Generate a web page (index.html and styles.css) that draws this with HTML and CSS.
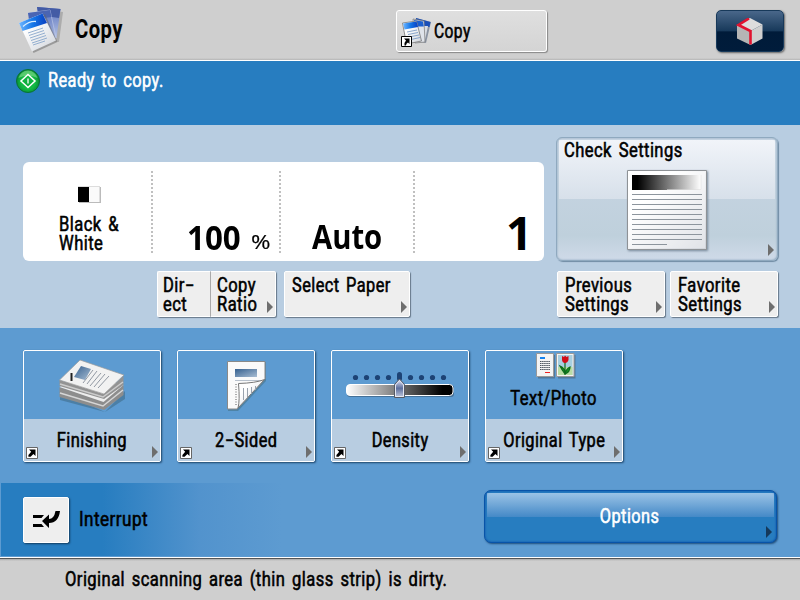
FILE: index.html
```html
<!DOCTYPE html>
<html lang="en">
<head>
<meta charset="utf-8">
<title>Copy</title>
<link rel="stylesheet" href="styles.css">
</head>
<body>
<svg width="0" height="0" class="defs">
  <defs>
    <linearGradient id="page" x1="0" y1="0" x2="1" y2="1"><stop offset=".3" stop-color="#fff"/><stop offset="1" stop-color="#cfd3da"/></linearGradient>
    <linearGradient id="ink" x1="0" y1="0" x2="1" y2="0"><stop stop-color="#6eb6ff"/><stop offset=".5" stop-color="#1476e8"/><stop offset="1" stop-color="#0a3fc0"/></linearGradient>
    <linearGradient id="back" x1="0" y1="0" x2="0" y2="1"><stop stop-color="#5a72bc"/><stop offset="1" stop-color="#b5c3e6"/></linearGradient>
    <linearGradient id="pic" x1="0" y1="0" x2="1" y2="1"><stop stop-color="#35608f"/><stop offset="1" stop-color="#a8bdd3"/></linearGradient>
    <linearGradient id="bw" x1="0" y1="0" x2="1" y2="0"><stop stop-color="#fff"/><stop offset=".9" stop-color="#000"/></linearGradient>
    <linearGradient id="wb" x1="0" y1="0" x2="1" y2="0"><stop offset=".08" stop-color="#000"/><stop offset="1" stop-color="#fff"/></linearGradient>
    <radialGradient id="green" cx=".5" cy=".55" r=".5"><stop stop-color="#0caa3c"/><stop offset=".6" stop-color="#12bb44"/><stop offset="1" stop-color="#0a8f35"/></radialGradient>
    <linearGradient id="knob" x1="0" y1="0" x2="0" y2="1"><stop stop-color="#eef"/><stop offset=".5" stop-color="#5c6e9c"/><stop offset="1" stop-color="#c3cbe0"/></linearGradient>
    <symbol id="shortcut" viewBox="0 0 12 12"><path d="M.5 .5h11v11H.5z" fill="#fff" stroke="#666"/><path d="M3 2.500h6.500V9L7.400 6.900 4.600 9.700 2.400 9.700V8L5.200 4.700z" fill="#000"/></symbol>
  </defs>
</svg>

<header class="header">
  <svg class="title-icon" width="48" height="48" viewBox="0 0 48 48">
    <path d="M22 2l23 3-4 30-18-2z" fill="#777" opacity=".4" transform="translate(1 1)"/>
    <path d="M20 1l23.500 2-4 29-17-2z" fill="url(#back)"/><path d="M20 1l23.500 2-1.500 9L22 9z" fill="#435ba5"/>
    <path d="M11 7l22-3 6 28-19 4z" fill="url(#back)" stroke="#c3ccea" stroke-width=".6"/><path d="M11 7l22-3 1.500 7L12 14z" fill="#4a65b3"/>
    <path d="M4 18l24-10 12.500 28-24 11z" fill="#666" opacity=".5"/>
    <path d="M2 17L25.500 7.500l13.500 27L15 45.500z" fill="url(#page)"/>
    <path d="M2 17L25.500 7.500l4.500 9.500L5.500 25z" fill="url(#ink)"/>
    <path d="M6 20.500q6-5.500 13-5" fill="none" stroke="#d7edff" stroke-width="1.300"/>
    <path d="M11 27l15-5M12 29.500l15-5M13 32l15-5M14 34.500l15-5M15 37l15-5M16 39l12-4" stroke="#94afd0" stroke-width="1"/>
  </svg>
  <h1 class="title"><span class="t">Copy</span></h1>
  <div class="tab">
    <svg class="tab-icon" width="31" height="32" viewBox="0 0 31 32">
      <path d="M15 1l15 4-5 21-12-2z" fill="#8a93a2"/><path d="M15 1l14.500 4-1 5-14-2z" fill="#1a4fb8"/><path d="M23 9h4l-3 14-3-1z" fill="#d9dde4"/>
      <path d="M12 2l11 2 1 21-10 1z" fill="#dfe3ea" stroke="#777" stroke-width=".7"/><path d="M13 3l9 1.500 .8 5-9 0z" fill="#1a5fd0"/>
      <path d="M1.500 6l14-2 5 20-15 3z" fill="url(#page)" stroke="#777" stroke-width=".8"/><path d="M2 6.500l13.500-2 1.500 5.500-13.500 2.500z" fill="url(#ink)"/>
      <path d="M6 15l10-2M7 17.500l10-2M8 20l10-2M10 22.500l9-2" stroke="#7e9cc4" stroke-width=".9"/>
      <path d="M.5 19.500h10v10H.5z" fill="#fff" stroke="#000"/><path d="M3 21.500h5.500v5.500L7 25.500Q5 26.500 5 28.500H3.500q-.5-3 1.500-5z" fill="#000"/>
    </svg>
    <span class="t">Copy</span>
  </div>
  <div class="cube">
    <svg width="28" height="28" viewBox="0 0 28 28">
      <path d="M14 0l12.500 6.500L14.500 13 1 7z" fill="#ddd"/><path d="M1 7L14.500 13v14L1 20.500z" fill="#b5b5b5"/><path d="M26.500 6.500L14.500 13v14l12-6.500z" fill="#cfcfcf"/>
      <path d="M13 .5L2.500 7 14.500 13v13.500" fill="none" stroke="#e1122f" stroke-width="2.600"/>
    </svg>
  </div>
</header>

<section class="status">
  <svg width="24" height="24" viewBox="0 0 24 24"><circle cx="12" cy="12" r="11.500" fill="url(#green)" stroke="#087237"/><path d="M2.500 9a9.800 9.800 0 0 1 19 0Q12 4 2.500 9z" fill="#7fe08b" opacity=".65"/><path d="M12 5.500l7 6.500-7 6.500L5 12z" fill="none" stroke="#fff" stroke-width="1.500"/><path d="M12 9.500v5" stroke="#fff" stroke-width="1.300"/></svg>
  <span class="t">Ready to copy.</span>
</section>

<main class="settings">
  <div class="left">
    <div class="display">
      <div class="cell color"><i class="bw"></i><span class="t two">Black &amp;<br>White</span></div>
      <div class="cell ratio"><span class="big n100">100</span><span class="pct">%</span></div>
      <div class="cell paper"><span class="big auto">Auto</span></div>
      <div class="cell count"><span class="big one">1</span></div>
    </div>
    <div class="row">
      <div class="btn direct"><span class="t">Dir−<br>ect</span></div>
      <div class="btn copyratio"><span class="t">Copy<br>Ratio</span><i class="arr"></i></div>
      <div class="btn select"><span class="t">Select Paper</span><i class="arr"></i></div>
    </div>
  </div>
  <div class="right">
    <div class="check">
      <span class="t">Check Settings</span>
      <svg width="80" height="80" viewBox="0 0 80 80">
        <path d="M.5 .5h79v79H.5z" fill="url(#page)" stroke="#8e9296"/><path d="M2 2h76v76H2z" fill="#fff" opacity=".35"/>
        <path d="M5 5h69v15H5z" fill="url(#wb)"/><path d="M40 19.500h34V5" fill="none" stroke="#ddd" stroke-opacity=".6"/>
        <path d="M5 24.500h70M5 29.500h70M5 34.500h70M5 39.500h70M5 44.500h70M5 49.500h70M5 54.500h70M5 59.500h70M5 64.500h70M5 69.500h70M5 74.500h35" stroke="#8d959d"/>
      </svg>
      <i class="arr"></i>
    </div>
    <div class="row">
      <div class="btn side"><span class="t">Previous<br>Settings</span><i class="arr"></i></div>
      <div class="btn side"><span class="t">Favorite<br>Settings</span><i class="arr"></i></div>
    </div>
  </div>
</main>

<section class="functions">
  <div class="cards">
    <div class="card">
      <div class="art"><svg width="136" height="68" viewBox="0 0 136 68">
        <path d="M36 41l45 20 20-21v8L81 61 36 49z" fill="#356" opacity=".4"/>
        <path d="M35.500 36l44 13 20-15v10L80 59 35.500 46z" fill="#8d8d8d"/><path d="M35.500 36l22-13 42 11-20 17z" fill="#ededed"/><path d="M36 42l43 13 20-16" fill="none" stroke="#d6d6d6" stroke-width="1.500"/>
        <path d="M35.500 29l44 14 20-18v9L80 48 35.500 35z" fill="#939393"/><path d="M36 33l43 13 20-15" fill="none" stroke="#ccc" stroke-width="1.500"/>
        <path d="M35.500 29L56 9l44 15-20 19z" fill="#f2f2f2" stroke="#999" stroke-width=".7"/>
        <path d="M57 15l10 3-6 11-11-3z" fill="url(#pic)"/><path d="M47.500 22v8" stroke="#222" stroke-width="2"/>
        <path d="M69 19l-10 13M73 20L63 33M77 22L66 35M81 23L70 36M85 25L74 37" stroke="#9299a3" stroke-width="1"/>
      </svg></div>
      <div class="label"><span class="t wide">Finishing</span><svg class="short" width="12" height="12"><use href="#shortcut"/></svg><i class="arr"></i></div>
    </div>
    <div class="card">
      <div class="art"><svg width="136" height="68" viewBox="0 0 136 68">
        <path d="M50 11h38v19L60 60H50z" fill="#355" opacity=".35"/>
        <path d="M49.500 10.500H87V28L59 58h-9.500z" fill="#fafafa" stroke="#898989"/>
        <path d="M57 18h22v8H57z" fill="url(#pic)"/><path d="M57 29.500h28" stroke="#b8c1cc"/><path d="M58 33v22" stroke="#aaa" stroke-width="2" stroke-dasharray="1 1.500"/>
        <path d="M60.500 32.500Q78 32 86.500 28.500L60 57Q62 50 60.500 32.500z" fill="url(#page)" stroke="#777"/>
        <path d="M65.500 37v12M69.500 37v9M73.500 36v7M77.500 35v4" stroke="#99a2ad"/>
      </svg></div>
      <div class="label"><span class="t">2−Sided</span><svg class="short" width="12" height="12"><use href="#shortcut"/></svg><i class="arr"></i></div>
    </div>
    <div class="card">
      <div class="art"><svg width="136" height="68" viewBox="0 0 136 68">
        <rect x="15" y="34" width="107" height="12" rx="3" fill="#234" opacity=".4"/>
        <rect x="14.500" y="33.500" width="106.500" height="11" rx="3.500" fill="url(#bw)" stroke="#fff"/>
        <g fill="#1d4375"><circle cx="23.500" cy="26.500" r="2.600"/><circle cx="34.500" cy="26.500" r="2.600"/><circle cx="45.500" cy="26.500" r="2.600"/><circle cx="56.500" cy="26.500" r="2.600"/><rect x="65" y="21" width="5" height="9" rx="2.500"/><circle cx="78.500" cy="26.500" r="2.600"/><circle cx="89.500" cy="26.500" r="2.600"/><circle cx="100.500" cy="26.500" r="2.600"/><circle cx="111.500" cy="26.500" r="2.600"/></g>
        <path d="M62.500 46.500v-13l5-5.500 5 5.500v13z" fill="url(#knob)" stroke="#555a65"/><path d="M63.500 45.500V34l4-4.500 4 4.500v11.500z" fill="none" stroke="#e5e8f0"/>
      </svg></div>
      <div class="label"><span class="t">Density</span><svg class="short" width="12" height="12"><use href="#shortcut"/></svg><i class="arr"></i></div>
    </div>
    <div class="card">
      <div class="art photo"><svg width="40" height="26" viewBox="0 0 40 26">
        <path d="M2 2h17v23.500H2zM22 2h17.500v23.500H22z" fill="#456" opacity=".5"/>
        <path d="M.5 .5h17v23H.5zM20.500 .5h17.500v23H20.500z" fill="#f4f4f4" stroke="#999"/>
        <path d="M4 4h5v2H4z" fill="#1583ef"/><path d="M4 8.500h10M4 10.500h10M4 12.500h10M4 14.500h10M4 16.500h10" stroke="#4b535c" stroke-dasharray="1.500 .6"/><path d="M9 19.500h5" stroke="#e22"/>
        <path d="M22 2h14.500v20H22z" fill="#a8cfe0"/><path d="M22 14h14.500v8H22z" fill="#b9dca4"/>
        <path d="M29 9v13M29 21q-3-4-5-8 5 2 5 8 1-5 5-7 0 5-5 7" fill="#159323" stroke="#0d6b1a" stroke-width="1.200"/><path d="M26 3l2 1 1-1.500L30.500 4l2-1v4q-1 3-3.500 3T26 7z" fill="#d20d18"/>
      </svg><span class="t">Text/Photo</span></div>
      <div class="label"><span class="t">Original Type</span><svg class="short" width="12" height="12"><use href="#shortcut"/></svg><i class="arr"></i></div>
    </div>
  </div>
  <div class="bottom">
    <div class="interrupt">
      <div class="ibtn"><svg width="28" height="18" viewBox="0 0 28 18"><path d="M0 4h11L8.500 7H0zM0 13h8.500l2.500 3H0z" fill="#000"/><path d="M9 10l7-6.500v4.500q5 0 6.500-8H27q-1.500 12-11 12v5z" fill="#000"/></svg></div>
      <span class="t">Interrupt</span>
    </div>
    <div class="options"><span class="t">Options</span><i class="arr"></i></div>
  </div>
</section>

<footer class="footer"><span class="t">Original scanning area (thin glass strip) is dirty.</span></footer>
</body>
</html>
```

FILE: styles.css
```css
* { box-sizing: border-box; }
body {
  margin: 0;
  width: 800px;
  height: 600px;
  overflow: hidden;
  background: #cfcfcf;
  color: #000;
  font: 19px/19px Roboto, "Liberation Sans", sans-serif;
}
.defs { position: absolute; }
.t {
  display: inline-block;
  white-space: nowrap;
  letter-spacing: .5px;
  word-spacing: 2.5px;
  -webkit-text-stroke: .55px currentColor;
  transform: translateY(.6px) scale(.872, 1.03);
  transform-origin: left center;
}

.header {
  height: 61px;
  display: flex;
  align-items: flex-start;
  background: linear-gradient(#cfcfcf 58px, #b5b5b5 60px, #fff 60px);
}
.title-icon { margin: 6px 0 0 17px; flex: none; }
.title { margin: 16px 0 0 10px; width: 320px; font-size: 25px; line-height: 25px; font-weight: bold; }
.title .t { transform: translateY(.5px) scaleX(.81); -webkit-text-stroke-width: 0; }
.tab {
  width: 151px; height: 42px; margin: 10px 0 0 1px;
  display: flex;
  border: 1px solid #fff; border-radius: 3px;
  background: linear-gradient(#dfdfdf, #d4d4d4);
  box-shadow: 1px 1px 1px #888;
}
.tab-icon { margin: 6px 2px 0 4px; }
.tab .t { margin-top: 10px; transform: translateY(.6px) scale(.82, 1.03); }
.cube {
  margin: 10px 0 0 169px; width: 68px; height: 42px;
  padding: 7px 0 0 19px;
  border-radius: 5px; border: 1px solid #17395a;
  background: linear-gradient(#49678a, #17395a 50%, #001b39 52%, #001c3b);
  box-shadow: 1px 1px 2px #666;
}

.status { height: 64px; display: flex; padding: 8px 0 0 16px; gap: 8px; color: #fff; background: #277dc0; }
.status .t { margin-top: 2px; transform: translateY(.6px) scale(.86, 1.03); }

.settings { height: 203px; display: flex; gap: 12px; padding: 13px 0 0 23px; background: #b8cde1; }
.left { width: 521px; padding-top: 24px; }
.display { height: 99px; display: flex; background: #fff; border-radius: 6px; padding: 9px 0 8px; }
.cell { display: flex; }
.cell + .cell { background: repeating-linear-gradient(#c0c0c0 0 2px, #fff 2px 4px) left / 2px 100% no-repeat; }
.color { width: 128px; flex-direction: column; padding: 15px 0 0 36px; }
.bw { width: 22px; height: 16px; margin: 0 0 12px 19px; background: linear-gradient(90deg, #000 50%, #fafafa 50%); box-shadow: 1px 1px 0 #bbb, inset -1px 1px 0 #ddd; }
.ratio { width: 128px; }
.paper { width: 134px; }
.count { flex: 1; }
.big { font-family: "Open Sans", sans-serif; font-weight: 700; font-size: 34px; line-height: 40px; transform-origin: left; }
.n100 { margin: 46px 0 0 36px; width: 64px; transform: scaleX(.92); }
.pct { font: 500 20px/24px "Open Sans", sans-serif; margin-top: 59px; -webkit-text-stroke: .2px #000; transform: scaleX(1.18); transform-origin: left; }
.auto { margin: 45px 0 0 33px; transform: scaleX(.86); }
.one { margin: 36px 0 0 93px; font-size: 46px; line-height: 50px; }

.row { display: flex; margin-top: 10px; }
.btn {
  position: relative; height: 46px; padding: 3px 0 0 7px;
  background: #eee; border: 1px solid #fff; border-radius: 2px;
  box-shadow: 1px 1px 1px #66788a;
}
.direct { width: 53px; margin-left: 134px; padding-left: 5px; border-right: 0; border-radius: 2px 0 0 2px; }
.copyratio { width: 66px; padding-left: 6px; border-left: 1px solid #aaa; border-radius: 0 2px 2px 0; }
.select { width: 126px; margin-left: 8px; }
.select .t { transform: translateY(.6px) scale(.86, 1.03); }
.side { width: 108px; margin-right: 5px; }
.arr { position: absolute; right: 2px; bottom: 3px; width: 6px; height: 12px; background: #6e6e6e; clip-path: polygon(0 0, 100% 50%, 0 100%); }

.check {
  position: relative; width: 222px; height: 124px; padding: 2px 0 0 7px;
  border: 1px solid #8fa9bf; border-radius: 6px;
  background:
    linear-gradient(#f1f4f9, #d7e0ea) 2px 2px / 216px 59px no-repeat,
    linear-gradient(#c9d6e4, #bfd0dc 80%, #cfdae8);
  box-shadow: 1px 1px 1px #6f8ba3, inset 0 0 2px #7f9db5;
  margin-top: -1px;
}
.check .t { transform: translateY(1px) scale(.872, 1.03); }
.check svg { display: block; margin: 11px 0 0 63px; filter: drop-shadow(1px 1px 1px #789); }
.check .arr { right: 3px; bottom: 4px; }
.right .row { margin: 10px 0 0 1px; }

.functions { height: 229px; padding-top: 22px; background: #5d9bd1; }
.cards { display: flex; gap: 16px; padding-left: 23px; }
.card {
  width: 138px; height: 112px;
  border: 1px solid #fff; border-radius: 2px;
  box-shadow: 1px 1px 2px #1d4468;
}
.art { height: 68px; }
.art svg { display: block; }
.photo { display: flex; flex-direction: column; align-items: center; padding-top: 2px; }
.photo svg { margin-left: 3px; }
.photo .t { margin-top: 9px; transform-origin: center; }
.label { position: relative; height: 42px; padding-top: 11px; text-align: center; background: #b8cde1; }
.label .t, .options .t { transform-origin: center; transform: translateY(.6px) scale(.86, 1.03); }
.label .wide { transform: translate(-.5px, .6px) scale(.87, 1.03); }
.short { position: absolute; left: 2px; bottom: 2px; }
.bottom { display: flex; margin-top: 21px; }
.interrupt {
  width: 484px; height: 73px; display: flex; gap: 10px; padding: 14px 0 0 22px; margin-left: 1px;
  background: linear-gradient(90deg, #277dc0 21%, #5293cd 41%, #5d9bd1 58%);
}
.interrupt .t { margin-top: 13px; transform: translateY(.6px) scale(.9, 1.03); }
.ibtn { width: 46px; height: 46px; padding: 13px 0 0 9px; background: #eee; border: 1px solid #fff; border-radius: 2px; box-shadow: 1px 1px 2px #123c60; }
.options {
  position: relative; width: 293px; height: 53px; margin: 7px 0 0 -1px; padding-top: 15px;
  text-align: center; color: #fff;
  border: 1px solid #0853a8; border-radius: 7px;
  background: linear-gradient(#9bc3e6, #4489c7) 2px 2px / 287px 24px no-repeat, #277dc0;
  box-shadow: 1px 1px 2px #1f4e7c, inset 0 0 2px #0849a8;
}
.options .t { margin-right: 2px; }
.options .arr { right: 4px; bottom: 4px; background: #15395a; }

.footer { height: 43px; padding: 12px 0 0 65px; background: linear-gradient(#fff 1px, #555 1px 2px, #aaa 2px, #cfcfcf 4px); }
```
